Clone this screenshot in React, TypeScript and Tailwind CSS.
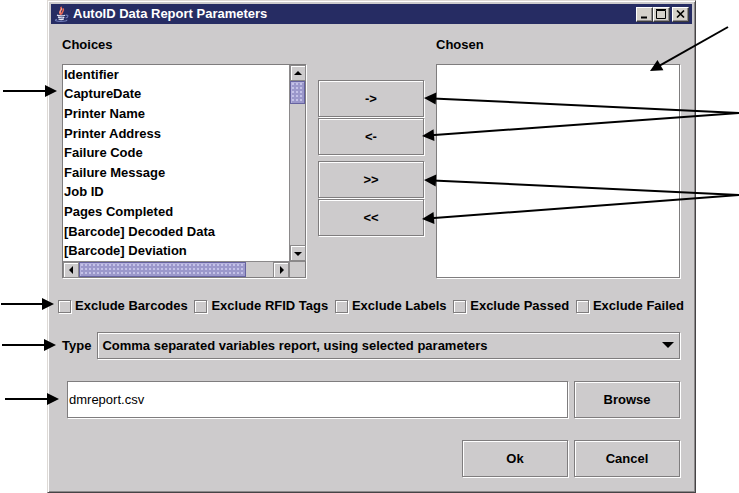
import { useState } from "react";
import type { ReactNode } from "react";

const choices = [
  "Identifier",
  "CaptureDate",
  "Printer Name",
  "Printer Address",
  "Failure Code",
  "Failure Message",
  "Job ID",
  "Pages Completed",
  "[Barcode] Decoded Data",
  "[Barcode] Deviation",
];

const excludes = ["Barcodes", "RFID Tags", "Labels", "Passed", "Failed"];

const etched =
  "border border-[#7f7d7e] shadow-[1px_1px_0_#fff,inset_1px_1px_0_#fff]";

interface MetalButtonProps {
  children: ReactNode;
  label?: string;
}

function MetalButton({ children, label }: MetalButtonProps) {
  return (
    <button
      type="button"
      aria-label={label}
      className={`h-[37px] w-[106px] bg-[#cdcbcc] font-bold ${etched}`}
    >
      {children}
    </button>
  );
}

function WindowButton({
  children,
  label,
}: {
  children: ReactNode;
  label: string;
}) {
  return (
    <button
      type="button"
      aria-label={label}
      className="h-[15px] w-[17px] border border-t-white border-l-white border-r-[#3c3c3c] border-b-[#3c3c3c] bg-[#d5d1ca] shadow-[inset_-1px_-1px_0_#8d8a8b]"
    >
      <svg
        viewBox="0 0 15 13"
        className="h-[13px] w-[15px]"
        fill="none"
        stroke="#000"
      >
        {children}
      </svg>
    </button>
  );
}

function JavaCup() {
  return (
    <svg viewBox="0 0 16 16" className="h-4 w-4" fill="none">
      <path
        d="M7 8.5C3.5 6 8.5 4.5 7 .8M8 8.5C6.5 6.5 11 5.5 9 2.5"
        stroke="#ef6a55"
        strokeWidth="1.6"
      />
      <path d="M6 7C5.5 5 8 4 7.8 2.2" stroke="#ffd2c2" strokeWidth=".8" />
      <path
        d="M3 9.2C5 10 9.5 10 11 9.2M4 11.2C6 12 9 12 10.3 11.2M4.5 13C6 13.7 8.5 13.7 9.8 13"
        stroke="#e3e6f6"
        strokeWidth="1.3"
      />
      <path
        d="M11.5 9.3C15 8.2 14.5 11.6 11.6 12M3 13.2C-.5 14.4 2.5 15.4 6.5 15.4C10.5 15.4 13.5 14.9 12.7 13.8"
        stroke="#6f7cb8"
        strokeWidth="1.1"
      />
    </svg>
  );
}

function ScrollArrow({ label, d }: { label: string; d: string }) {
  return (
    <button
      type="button"
      aria-label={label}
      className="h-4 w-4 shrink-0 border border-[#8b898a] bg-[#cdcbcc] shadow-[inset_1px_1px_0_#fff]"
    >
      <svg viewBox="0 0 14 14" className="h-[14px] w-[14px]">
        <path d={d} fill="#000" />
      </svg>
    </button>
  );
}

const thumb =
  "border border-[#6663a0] bg-[#9b98cb] bg-[radial-gradient(#c4c2e8_1px,transparent_1px)] bg-[size:4px_4px] shadow-[inset_1px_1px_0_#b5b2dd,inset_-1px_-1px_0_#9b98cb]";

function ChoiceList() {
  return (
    <div className="grid min-w-0 flex-1 grid-cols-[1fr_16px] grid-rows-[1fr_16px] border border-[#7f7d7e] bg-white shadow-[1px_1px_0_#fff]">
      <ul
        role="listbox"
        aria-labelledby="choices-label"
        className="grid auto-rows-fr pl-px"
      >
        {choices.map((choice) => (
          <li
            key={choice}
            role="option"
            aria-selected={false}
            className="flex items-center whitespace-nowrap"
          >
            {choice}
          </li>
        ))}
      </ul>
      <div className="flex flex-col border-l border-[#8b898a] bg-[#cdcbcc]">
        <ScrollArrow label="Scroll up" d="M7 5L11 9H3Z" />
        <div className={`h-[23px] ${thumb}`} />
        <div className="flex-1" />
        <ScrollArrow label="Scroll down" d="M7 10L3 6H11Z" />
      </div>
      <div className="flex border-t border-[#8b898a] bg-[#cdcbcc]">
        <ScrollArrow label="Scroll left" d="M5 7L9 3V11Z" />
        <div className={`w-[167px] ${thumb}`} />
        <div className="flex-1" />
        <ScrollArrow label="Scroll right" d="M10 7L6 3V11Z" />
      </div>
      <div className="border-t border-l border-[#8b898a] bg-[#cdcbcc]" />
    </div>
  );
}

interface Point {
  x: number;
  y: number;
}

function Arrow({ from, to }: { from: Point; to: Point }) {
  const angle = (Math.atan2(to.y - from.y, to.x - from.x) * 180) / Math.PI;
  const length = Math.hypot(to.x - from.x, to.y - from.y);
  return (
    <g transform={`translate(${to.x} ${to.y}) rotate(${angle})`}>
      <path d={`M${-length} 0H-9`} stroke="#000" strokeWidth="2" />
      <path d="M0 0L-12 -6V6Z" />
    </g>
  );
}

function App() {
  const [fileName, setFileName] = useState("dmreport.csv");

  return (
    <div className="relative bg-white pr-[43px] pl-[47px] font-['Liberation_Sans',Arial,sans-serif] text-[13px] leading-4 text-black">
      <main className="border border-t-[#dedad6] border-r-[#464446] border-b-[#464446] border-l-[#dedad6] bg-[#cdcbcc] p-[3px] shadow-[inset_1px_1px_0_#fff,inset_-1px_-1px_0_#8d8a8b]">
        <header className="flex h-5 items-center bg-[#262c63] px-[3px] text-white">
          <JavaCup />
          <h1 className="ml-[3px] flex-1 font-bold">
            AutoID Data Report Parameters
          </h1>
          <WindowButton label="Minimize">
            <path d="M4 9.5H10" strokeWidth="2" />
          </WindowButton>
          <WindowButton label="Maximize">
            <path d="M2.5 2.5H11.5V10.5H2.5ZM2 1.5H12" />
          </WindowButton>
          <span className="w-[2px]" />
          <WindowButton label="Close">
            <path d="M4 2.5L11 9.5M11 2.5L4 9.5" strokeWidth="1.7" />
          </WindowButton>
        </header>

        <form
          className="pt-[13px] pr-3 pb-3 pl-[11px] font-bold"
          onSubmit={(e) => e.preventDefault()}
        >
          <div className="flex gap-3">
            <h2 id="choices-label" className="flex-1">
              Choices
            </h2>
            <div className="w-[106px]" />
            <h2 id="chosen-label" className="flex-1">
              Chosen
            </h2>
          </div>

          <div className="mt-[11px] flex h-[214px] gap-3">
            <ChoiceList />
            <div className="flex flex-col gap-px pt-4">
              <MetalButton label="Add">-&gt;</MetalButton>
              <MetalButton label="Remove">&lt;-</MetalButton>
              <div className="h-1" />
              <MetalButton label="Add all">&gt;&gt;</MetalButton>
              <MetalButton label="Remove all">&lt;&lt;</MetalButton>
            </div>
            <ul
              role="listbox"
              aria-labelledby="chosen-label"
              className="min-w-0 flex-1 border border-[#7f7d7e] bg-white shadow-[1px_1px_0_#fff]"
            />
          </div>

          <div className="-mx-1 mt-5 flex justify-between">
            {excludes.map((item) => (
              <label
                key={item}
                className="flex items-center gap-1 whitespace-nowrap"
              >
                <input
                  type="checkbox"
                  className={`h-[13px] w-[13px] appearance-none ${etched}`}
                />
                Exclude {item}
              </label>
            ))}
          </div>

          <div className="mt-[18px] flex items-center gap-[6px]">
            <label htmlFor="type">Type</label>
            <div className="relative flex-1">
              <select
                id="type"
                className={`block h-[27px] w-full appearance-none bg-[#cdcbcc] pl-1 font-bold ${etched}`}
              >
                <option>
                  Comma separated variables report, using selected parameters
                </option>
              </select>
              <svg
                viewBox="0 0 12 6"
                className="pointer-events-none absolute top-[10px] right-[6px] h-[6px] w-3"
              >
                <path d="M0 0H12L6 6Z" />
              </svg>
            </div>
          </div>

          <div className="mt-[22px] flex gap-[6px] pl-[5px]">
            <input
              type="text"
              aria-label="File name"
              value={fileName}
              onChange={(e) => setFileName(e.target.value)}
              className="h-[37px] min-w-0 flex-1 border border-[#7f7d7e] bg-white px-px font-normal shadow-[1px_1px_0_#fff]"
            />
            <MetalButton>Browse</MetalButton>
          </div>

          <div className="mt-[22px] flex justify-end gap-[6px]">
            <MetalButton>Ok</MetalButton>
            <MetalButton>Cancel</MetalButton>
          </div>
        </form>
      </main>

      {/* callouts pointing at the fields */}
      <svg
        viewBox="0 0 60 493"
        className="pointer-events-none absolute top-0 left-0 h-[493px] w-[60px]"
        aria-hidden="true"
      >
        <Arrow from={{ x: 3, y: 91 }} to={{ x: 57, y: 91 }} />
        <Arrow from={{ x: 1, y: 304 }} to={{ x: 54, y: 304 }} />
        <Arrow from={{ x: 2, y: 345 }} to={{ x: 56, y: 345 }} />
        <Arrow from={{ x: 5, y: 399 }} to={{ x: 59, y: 399 }} />
      </svg>
      <svg
        viewBox="419 0 320 493"
        className="pointer-events-none absolute top-0 right-0 h-[493px] w-80"
        aria-hidden="true"
      >
        <Arrow from={{ x: 728, y: 27 }} to={{ x: 650, y: 71 }} />
        <Arrow from={{ x: 739, y: 113 }} to={{ x: 424, y: 98 }} />
        <Arrow from={{ x: 739, y: 113 }} to={{ x: 422, y: 136 }} />
        <Arrow from={{ x: 739, y: 195 }} to={{ x: 424, y: 180 }} />
        <Arrow from={{ x: 739, y: 195 }} to={{ x: 422, y: 219 }} />
      </svg>
    </div>
  );
}

export default App;
